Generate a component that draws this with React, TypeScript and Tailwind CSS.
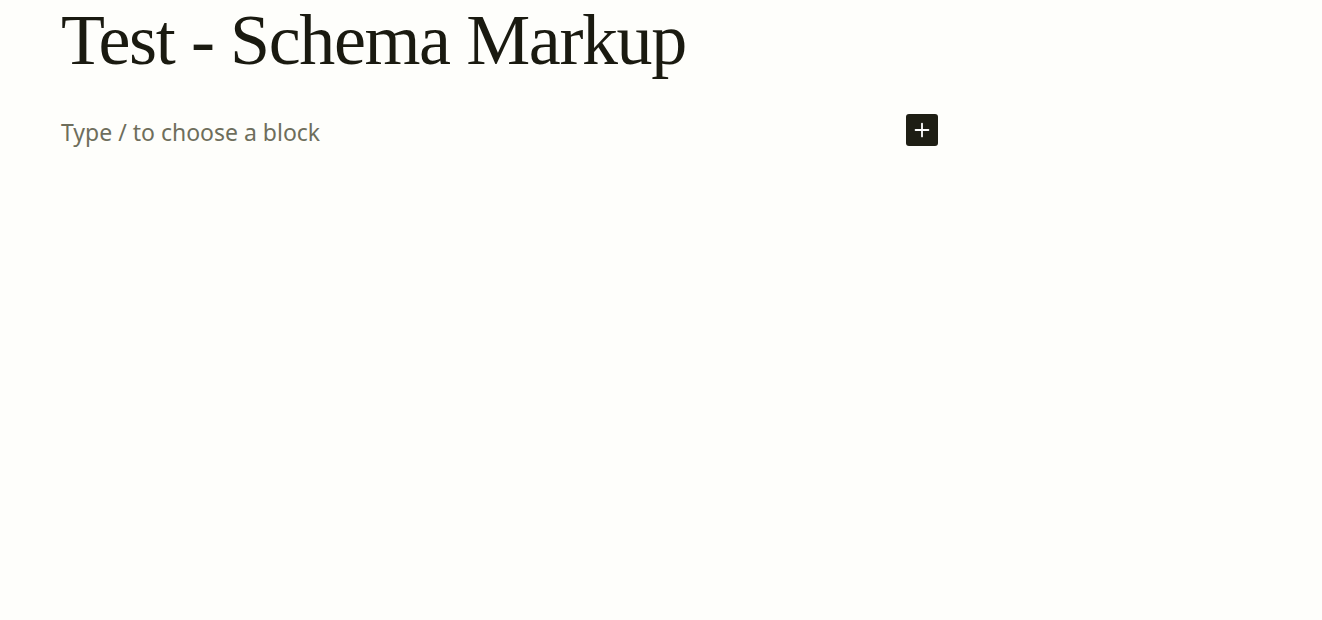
import { Plus } from 'lucide-react';

export default function App() {
  return (
    <div className="min-h-[620px] w-full bg-[#fefefb] overflow-hidden">
      <div className="pl-[61px] pt-[2px] w-[938px]">
        <h1 className="font-['Liberation_Serif',serif] font-normal text-[72px] leading-[76px] text-[#1a1a10] tracking-[-1.4px] whitespace-nowrap">
          Test - Schema Markup
        </h1>
        <div className="mt-[36px] flex items-start justify-between">
          <p className="mt-[1px] font-['Noto_Sans',sans-serif] text-[23px] leading-[35px] text-[#6e6e5c]">Type / to choose a block</p>
          <button className="w-8 h-8 rounded-[3px] bg-[#1e1e14] flex items-center justify-center text-white">
            <Plus size={22} strokeWidth={2} />
          </button>
        </div>
      </div>
    </div>
  );
}
